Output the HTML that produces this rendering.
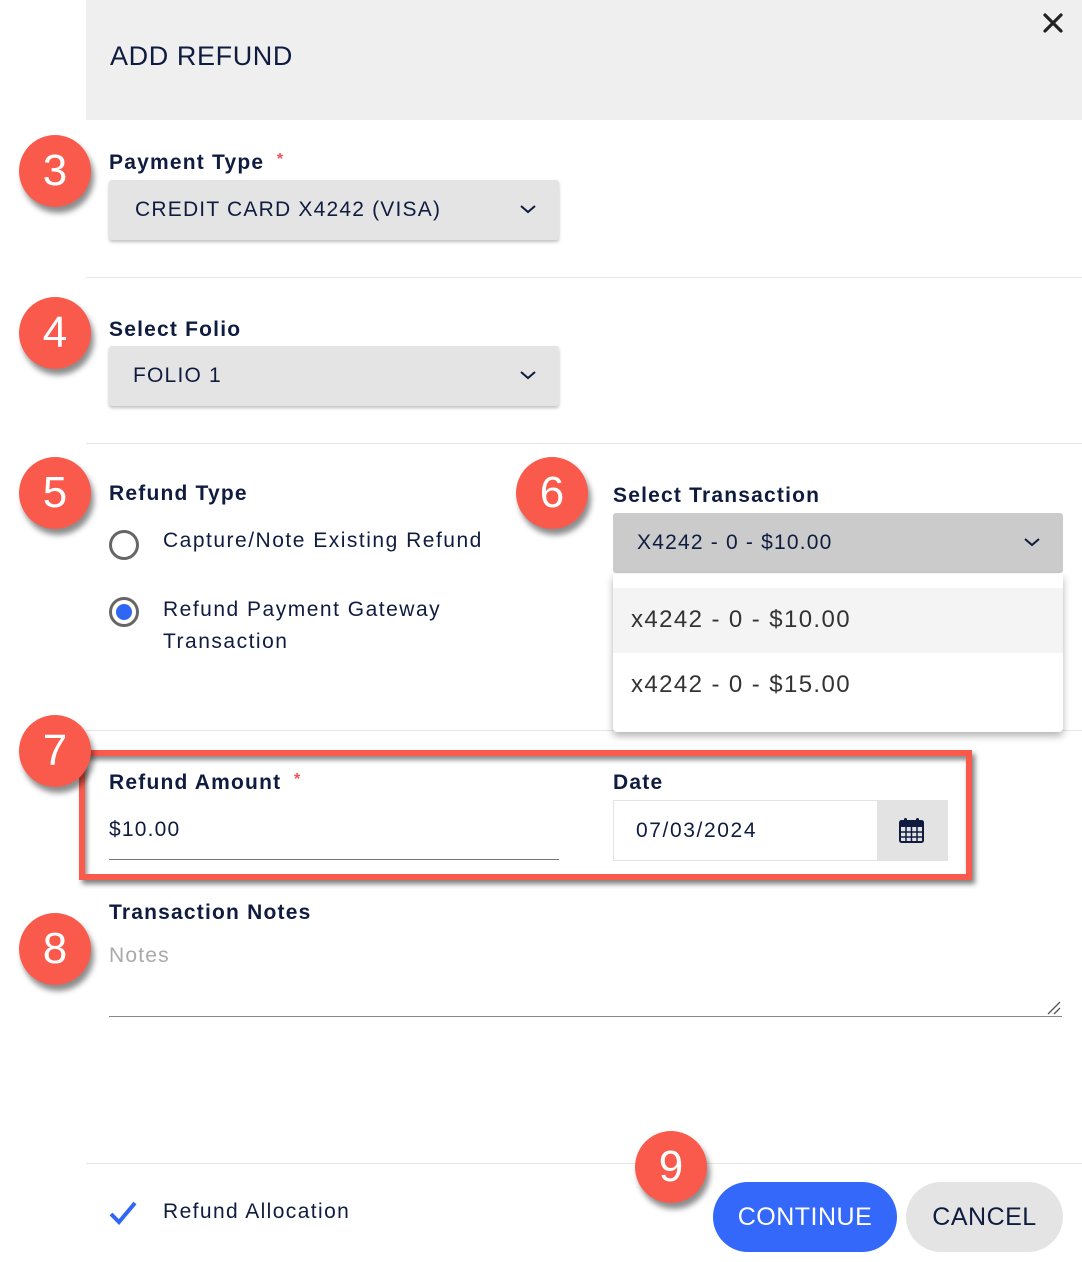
<!DOCTYPE html>
<html><head><meta charset="utf-8"><style>
*{margin:0;padding:0;box-sizing:border-box}
body{width:1082px;height:1262px;background:#fff;position:relative;overflow:hidden;font-family:"Liberation Sans",sans-serif;color:#0f1c3f;letter-spacing:1.2px}
.a{position:absolute}
.hdr{left:86px;top:0;width:996px;height:120px;background:#efefef}
.lbl{font-weight:bold;font-size:21px}
.badge{width:72px;height:72px;border-radius:50%;background:#fa5a4c;color:#fff;font-size:44px;text-align:center;line-height:72px;box-shadow:3px 6px 6px rgba(0,0,0,.45);letter-spacing:0}
.sel{background:#e4e4e4;border-radius:3px;box-shadow:0 2px 3px rgba(0,0,0,.25);font-size:21px;padding-left:26px;line-height:60px}
.chev{position:absolute;right:22px;top:23px}
.hr{height:1px;background:#e6e6e6;left:86px;width:996px}
.radio{width:30px;height:30px;border:3px solid #666;border-radius:50%}
.rt{font-size:21px}
</style></head><body>
<div class="a hdr"></div>
<div class="a" style="left:110px;top:41px;font-size:27px;letter-spacing:0.6px">ADD REFUND</div>
<svg class="a" style="left:1042px;top:12px" width="22" height="22" viewBox="0 0 22 22"><path d="M3 3L19 19M19 3L3 19" stroke="#222" stroke-width="3.2" stroke-linecap="round"/></svg>

<div class="a badge" style="left:19px;top:135px">3</div>
<div class="a lbl" style="left:109px;top:151px">Payment Type <span style="color:#f0505a;font-size:16px;vertical-align:top">&nbsp;*</span></div>
<div class="a sel" style="left:109px;top:180px;width:450px;height:60px">CREDIT CARD X4242 (VISA)<svg class="chev" width="18" height="12" viewBox="0 0 18 12"><path d="M2 3L9 9L16 3" stroke="#0f1c3f" stroke-width="2" fill="none"/></svg></div>
<div class="a hr" style="top:277px"></div>

<div class="a badge" style="left:19px;top:297px">4</div>
<div class="a lbl" style="left:109px;top:318px">Select Folio</div>
<div class="a sel" style="left:109px;top:346px;width:450px;height:60px;padding-left:24px">FOLIO 1<svg class="chev" width="18" height="12" viewBox="0 0 18 12"><path d="M2 3L9 9L16 3" stroke="#0f1c3f" stroke-width="2" fill="none"/></svg></div>
<div class="a hr" style="top:443px"></div>

<div class="a badge" style="left:19px;top:457px">5</div>
<div class="a lbl" style="left:109px;top:482px">Refund Type</div>
<div class="a radio" style="left:109px;top:530px"></div>
<div class="a rt" style="left:163px;top:529px;letter-spacing:1.5px">Capture/Note Existing Refund</div>
<div class="a radio" style="left:109px;top:597px;padding:4px"><div style="width:16px;height:16px;border-radius:50%;background:#2f66f6"></div></div>
<div class="a rt" style="left:163px;top:594px;line-height:32px;letter-spacing:1.5px">Refund Payment Gateway<br>Transaction</div>

<div class="a badge" style="left:516px;top:457px">6</div>
<div class="a lbl" style="left:613px;top:484px">Select Transaction</div>
<div class="a sel" style="left:613px;top:513px;width:450px;height:60px;background:#cbcbcb;box-shadow:none;padding-left:24px">X4242 - 0 - $10.00<svg class="chev" width="18" height="12" viewBox="0 0 18 12"><path d="M2 3L9 9L16 3" stroke="#0f1c3f" stroke-width="2" fill="none"/></svg></div>
<div class="a hr" style="top:730px"></div>
<div class="a" style="left:613px;top:574px;width:450px;height:158px;background:#fff;border-radius:0 0 4px 4px;box-shadow:0 4px 8px rgba(0,0,0,.3)">
<div style="margin-top:14px;height:65px;background:#f4f4f4;font-size:24px;color:#333;line-height:63px;padding-left:18px;letter-spacing:1.4px">x4242 - 0 - $10.00</div>
<div style="height:65px;font-size:24px;color:#333;line-height:63px;padding-left:18px;letter-spacing:1.4px">x4242 - 0 - $15.00</div>
</div>

<div class="a" style="left:79px;top:750px;width:893px;height:130px;border:6px solid #fa5a4c;box-shadow:3px 4px 5px rgba(0,0,0,.5), inset 2px 4px 5px rgba(0,0,0,.45)"></div>
<div class="a badge" style="left:19px;top:715px">7</div>
<div class="a lbl" style="left:109px;top:771px">Refund Amount <span style="color:#f0505a;font-size:16px;vertical-align:top">&nbsp;*</span></div>
<div class="a" style="left:109px;top:818px;font-size:21px">$10.00</div>
<div class="a" style="left:109px;top:859px;width:450px;height:1px;background:#777"></div>
<div class="a lbl" style="left:613px;top:771px">Date</div>
<div class="a" style="left:613px;top:800px;width:335px;height:61px;border:1px solid #e3e3e3"></div>
<div class="a" style="left:636px;top:819px;font-size:21px;letter-spacing:1.6px">07/03/2024</div>
<div class="a" style="left:877px;top:800px;width:71px;height:61px;background:#e3e3e3"></div>
<svg class="a" style="left:899px;top:817px" width="25" height="26" viewBox="0 0 25 26"><rect x="1" y="4" width="23" height="21" rx="1.5" fill="none" stroke="#0f1c3f" stroke-width="2"/><rect x="1" y="4" width="23" height="6" fill="#0f1c3f"/><path d="M1 15H24M1 20H24M7 10V25M12.5 10V25M18 10V25" stroke="#0f1c3f" stroke-width="1.5"/><rect x="5" y="1" width="3" height="6" rx="1.5" fill="#0f1c3f"/><rect x="17" y="1" width="3" height="6" rx="1.5" fill="#0f1c3f"/></svg>

<div class="a badge" style="left:19px;top:913px">8</div>
<div class="a lbl" style="left:109px;top:901px">Transaction Notes</div>
<div class="a" style="left:109px;top:944px;font-size:21px;color:#aaa">Notes</div>
<div class="a" style="left:109px;top:1016px;width:953px;height:1px;background:#888"></div>
<svg class="a" style="left:1046px;top:1000px" width="16" height="16"><path d="M2 14L14 2M8 14L14 8" stroke="#555" stroke-width="1.3"/></svg>

<div class="a hr" style="top:1163px"></div>
<svg class="a" style="left:108px;top:1200px" width="30" height="26" viewBox="0 0 30 26"><path d="M3 14L11 22L27 3" stroke="#2f66f6" stroke-width="4" fill="none"/></svg>
<div class="a rt" style="left:163px;top:1200px;letter-spacing:1.4px">Refund Allocation</div>
<div class="a" style="left:713px;top:1182px;width:184px;height:70px;border-radius:35px;background:#3368fb;color:#fff;font-size:25px;text-align:center;line-height:70px;letter-spacing:0.5px">CONTINUE</div>
<div class="a" style="left:906px;top:1182px;width:157px;height:70px;border-radius:35px;background:#e4e4e4;font-size:25px;text-align:center;line-height:70px;letter-spacing:0.5px">CANCEL</div>
<div class="a badge" style="left:635px;top:1131px">9</div>
</body></html>
